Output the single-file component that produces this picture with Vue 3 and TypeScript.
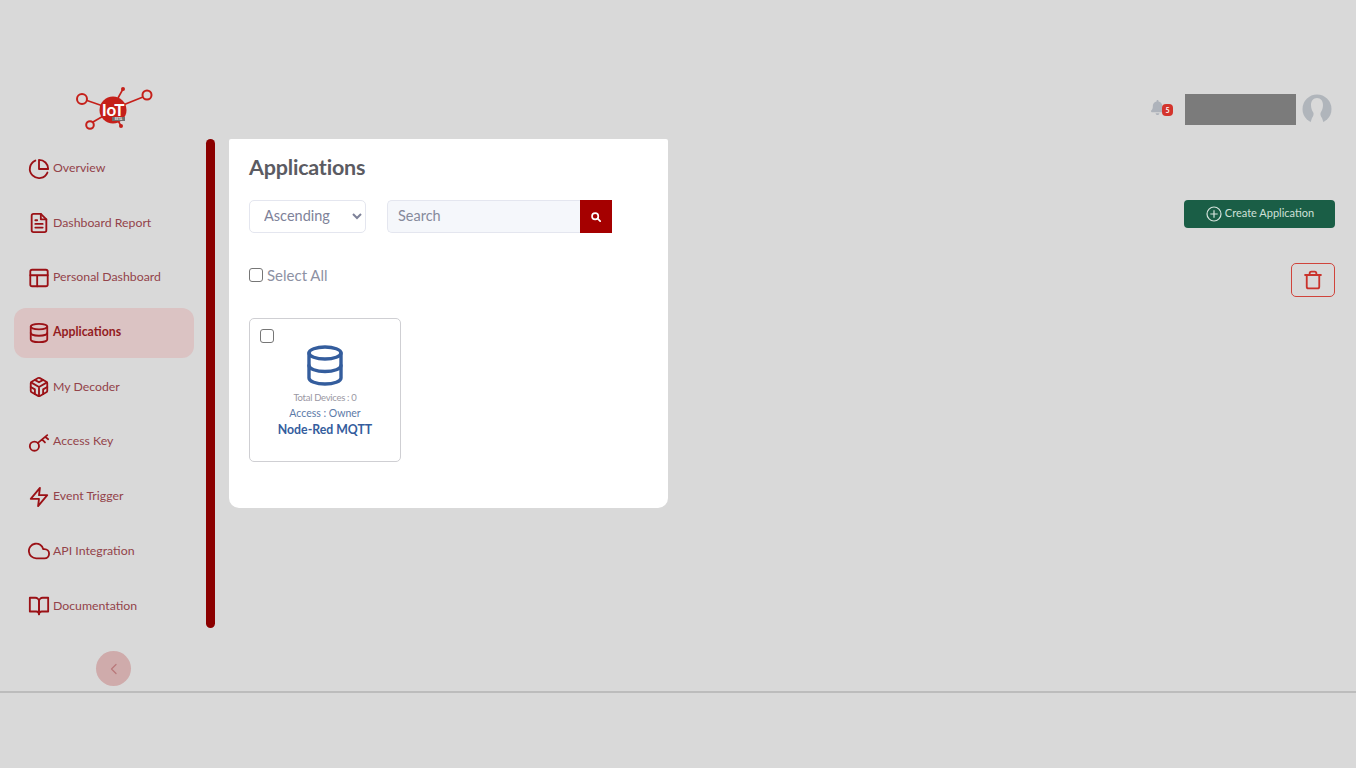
<script setup lang="ts">
const navItems: { label: string; icon: string; active?: boolean }[] = [
  { label: 'Overview', icon: 'pie' },
  { label: 'Dashboard Report', icon: 'doc' },
  { label: 'Personal Dashboard', icon: 'layout' },
  { label: 'Applications', icon: 'db', active: true },
  { label: 'My Decoder', icon: 'cube' },
  { label: 'Access Key', icon: 'key' },
  { label: 'Event Trigger', icon: 'bolt' },
  { label: 'API Integration', icon: 'cloud' },
  { label: 'Documentation', icon: 'book' },
]
</script>

<template>
  <div class="page">
    <div class="main">
      <aside class="sidebar">
        <div class="logo">
          <svg width="78" height="46" viewBox="0 0 78 46">
            <g stroke="#c5201a" stroke-width="1.6" fill="none">
              <line x1="12" y1="15.500" x2="28" y2="21" />
              <line x1="48" y1="20" x2="68" y2="12" />
              <line x1="18" y1="37" x2="30" y2="30" />
              <line x1="43" y1="13" x2="48" y2="4" />
              <line x1="40" y1="30" x2="46" y2="41" />
              <circle cx="7" cy="14" r="5" stroke-width="2" />
              <circle cx="72" cy="10" r="4.500" stroke-width="2" />
              <circle cx="15" cy="40" r="3.800" stroke-width="2" />
            </g>
            <circle cx="48" cy="4" r="2" fill="#c5201a" />
            <circle cx="46" cy="41" r="2" fill="#c5201a" />
            <circle cx="38" cy="25" r="13.500" fill="#c5201a" />
            <text x="38" y="31" text-anchor="middle" class="logo-text">IoT</text>
            <rect x="37" y="32" width="13" height="4" fill="#6f6f6f" />
            <text x="43.500" y="35.400" text-anchor="middle" class="logo-beta">BETA</text>
          </svg>
        </div>
        <div class="nav-wrap">
          <nav class="nav">
            <a v-for="item in navItems" :key="item.label" class="nav-item" :class="{ active: item.active }">
              <span class="nav-icon">
                <svg width="22" height="22" viewBox="0 0 24 24" fill="none" stroke="#9b1116" stroke-width="2" stroke-linecap="round" stroke-linejoin="round">
                  <template v-if="item.icon === 'pie'">
                    <path d="M21.200 15.900A10 10 0 1 1 8 2.800" />
                    <path d="M22 12A10 10 0 0 0 12 2v10z" />
                  </template>
                  <template v-else-if="item.icon === 'doc'">
                    <path d="M14 2H6a2 2 0 0 0-2 2v16a2 2 0 0 0 2 2h12a2 2 0 0 0 2-2V8z" />
                    <path d="M14 2v6h6M16 13H8M16 17H8M10 9H8" />
                  </template>
                  <template v-else-if="item.icon === 'layout'">
                    <rect x="2.500" y="3" width="19" height="18" rx="2" />
                    <path d="M2.500 9h19M10 21V9" />
                  </template>
                  <template v-else-if="item.icon === 'db'">
                    <ellipse cx="12" cy="5" rx="9" ry="3" />
                    <path d="M21 12c0 1.660-4 3-9 3s-9-1.340-9-3" />
                    <path d="M3 5v14c0 1.660 4 3 9 3s9-1.340 9-3V5" />
                  </template>
                  <template v-else-if="item.icon === 'cube'">
                    <path d="M21 16V8a2 2 0 0 0-1-1.730l-7-4a2 2 0 0 0-2 0l-7 4A2 2 0 0 0 3 8v8a2 2 0 0 0 1 1.730l7 4a2 2 0 0 0 2 0l7-4A2 2 0 0 0 21 16z" />
                    <path d="M7.500 4.200l4.500 2.600 4.500-2.600M7.500 19.800V14.600L3 12M21 12l-4.500 2.600v5.200M3.300 7l8.700 5 8.700-5M12 22V12" />
                  </template>
                  <template v-else-if="item.icon === 'key'">
                    <circle cx="7" cy="16.500" r="5" />
                    <path d="M10.800 13 21 4.500M15.500 9.500l3 3M19 6.500l3 2.500" />
                  </template>
                  <template v-else-if="item.icon === 'bolt'">
                    <path d="M13 2 3 14h9l-1 8 10-12h-9l1-8z" />
                  </template>
                  <template v-else-if="item.icon === 'cloud'">
                    <path d="M18 10h-1.300A8 8 0 1 0 9 20h9a5 5 0 0 0 0-10z" />
                  </template>
                  <template v-else>
                    <path d="M2 3h6a4 4 0 0 1 4 4v14a3 3 0 0 0-3-3H2z" />
                    <path d="M22 3h-6a4 4 0 0 0-4 4v14a3 3 0 0 1 3-3h7z" />
                  </template>
                </svg>
              </span>
              <span class="nav-label">{{ item.label }}</span>
            </a>
          </nav>
          <div class="scrollbar"></div>
        </div>
        <div class="collapse-row">
          <button class="collapse" type="button" aria-label="Collapse">
            <svg width="12" height="12" viewBox="0 0 24 24" fill="none" stroke="#b9797b" stroke-width="2.500" stroke-linecap="round" stroke-linejoin="round">
              <path d="M16 3 7 12l9 9" />
            </svg>
          </button>
        </div>
      </aside>

      <div class="content">
        <header class="topbar">
          <span class="bell">
            <svg width="15" height="15" viewBox="0 0 448 512" fill="#aeb3bb">
              <path d="M224 0c-18 0-32 14-32 32v19C119 66 64 131 64 208v19c0 47-17 92-48 127l-7 8c-8 9-10 22-5 34s16 19 29 19h384c13 0 24-8 29-19s3-25-5-34l-7-8c-31-35-48-80-48-127v-19c0-77-55-142-128-157V32c0-18-14-32-32-32zm45 493c12-12 19-28 19-45H160c0 17 7 33 19 45s28 19 45 19 33-7 45-19z" />
            </svg>
            <span class="badge">5</span>
          </span>
          <div class="user-block"></div>
          <span class="avatar">
            <svg width="30" height="30" viewBox="0 0 30 30">
              <circle cx="15" cy="15" r="14.500" fill="#b0b5bb" />
              <path d="M15 4c-3.800 0-6 3-6 7 0 3 1 5.500 2.300 7.500.6 1.500.3 3.500-1.300 5.500l-2 6h14l-2-6c-1.600-2-1.900-4-1.300-5.500 1.300-2 2.300-4.500 2.300-7.500 0-4-2.200-7-6-7z" fill="#d9d9d9" />
            </svg>
          </span>
        </header>

        <div class="work">
          <section class="panel">
            <h1 class="title">Applications</h1>
            <div class="filters">
              <select class="sort">
                <option>Ascending</option>
                <option>Descending</option>
              </select>
              <div class="search">
                <input class="search-input" type="text" placeholder="Search" />
                <button class="search-btn" type="button" aria-label="Search">
                  <svg width="10" height="10" viewBox="0 0 24 24" fill="none" stroke="#fff" stroke-width="4" stroke-linecap="round">
                    <circle cx="10" cy="10" r="7.500" />
                    <path d="m16 16 6 6" />
                  </svg>
                </button>
              </div>
            </div>
            <label class="select-all">
              <input class="check" type="checkbox" />
              <span>Select All</span>
            </label>
            <article class="card">
              <input class="check card-check" type="checkbox" />
              <svg class="card-icon" width="38" height="41" viewBox="0 0 38 41" fill="none" stroke="#345d9d" stroke-width="3.400" stroke-linecap="round" stroke-linejoin="round">
                <ellipse cx="19" cy="8" rx="16" ry="6" />
                <path d="M35 20.500c0 3.300-7.200 6-16 6s-16-2.700-16-6" />
                <path d="M3 8v25c0 3.300 7.200 6 16 6s16-2.700 16-6V8" />
              </svg>
              <p class="devices">Total Devices : 0</p>
              <p class="access">Access : Owner</p>
              <p class="app-name">Node-Red MQTT</p>
            </article>
          </section>

          <div class="actions">
            <button class="create" type="button">
              <svg width="16" height="16" viewBox="0 0 16 16" fill="none" stroke="#d5e3dc" stroke-width="1.200">
                <circle cx="8" cy="8" r="7" />
                <path d="M8 4.300v7.400M4.300 8h7.400" />
              </svg>
              <span class="create-label">Create Application</span>
            </button>
            <button class="trash" type="button" aria-label="Delete">
              <svg width="20" height="20" viewBox="0 0 24 24" fill="none" stroke="#c9332c" stroke-width="2.200" stroke-linecap="round" stroke-linejoin="round">
                <path d="M2.500 6h19M19.500 6v14a2 2 0 0 1-2 2h-11a2 2 0 0 1-2-2V6M8 6V4a2 2 0 0 1 2-2h4a2 2 0 0 1 2 2v2" />
              </svg>
            </button>
          </div>
        </div>
      </div>
    </div>
    <footer class="footer"></footer>
  </div>
</template>

<style>
html, body { margin: 0; background: #d9d9d9; }
</style>

<style scoped>
.page {
  width: 1356px;
  height: 768px;
  background: #d9d9d9;
  display: flex;
  flex-direction: column;
  font-family: "Lato", "Noto Sans", sans-serif;
  overflow: hidden;
}
.main {
  height: 691px;
  padding-top: 85px;
  box-sizing: border-box;
  display: flex;
}
.sidebar {
  width: 229px;
  flex: none;
  display: flex;
  flex-direction: column;
}
.logo {
  height: 54px;
  padding-left: 75px;
}
.logo svg { display: block; }
.logo-text { font: 700 17px "Lato", sans-serif; fill: #fff; }
.logo-beta { font: 700 3px "Lato", sans-serif; fill: #e8e8e8; }
.nav-wrap {
  height: 489px;
  display: flex;
  padding-left: 14px;
}
.nav {
  width: 180px;
  padding-top: 4.500px;
  box-sizing: border-box;
  display: flex;
  flex-direction: column;
  gap: 4.700px;
  overflow: hidden;
}
.nav-item {
  flex: none;
  height: 50px;
  padding-left: 14px;
  border-radius: 12px;
  display: flex;
  align-items: center;
  gap: 3px;
  color: #93434a;
  font-size: 12.300px;
}
.nav-item.active {
  background: #dbc3c3;
  color: #931c22;
  font-weight: 700;
}
.nav-label { padding-bottom: 2px; }
.nav-icon { width: 22px; height: 22px; flex: none; }
.nav-icon svg { display: block; }
.scrollbar {
  width: 9px;
  margin-left: 12px;
  border-radius: 5px;
  background: #8b0000;
}
.collapse-row {
  display: flex;
  padding: 23px 0 0 96px;
}
.collapse {
  width: 35px;
  height: 35px;
  padding: 0;
  border: 0;
  border-radius: 50%;
  background: #cfabab;
  display: flex;
  align-items: center;
  justify-content: center;
}
.content {
  flex: 1;
  min-width: 0;
  display: flex;
  flex-direction: column;
}
.topbar {
  height: 54px;
  display: flex;
  align-items: flex-start;
  padding: 9px 24px 0 0;
  box-sizing: border-box;
  justify-content: flex-end;
}
.bell {
  position: relative;
  width: 24px;
  height: 30px;
  margin-right: 11px;
  padding-top: 6px;
  box-sizing: border-box;
}
.bell svg { display: block; }
.badge {
  position: absolute;
  left: 12px;
  top: 10px;
  width: 11px;
  height: 12px;
  border-radius: 4px;
  background: #d4342c;
  color: #fff;
  font: 700 7px/12px "Lato", sans-serif;
  text-align: center;
}
.user-block {
  width: 111px;
  height: 31px;
  background: #7b7b7b;
}
.avatar {
  width: 30px;
  height: 30px;
  margin-left: 6px;
}
.avatar svg { display: block; }
.work {
  flex: 1;
  display: flex;
  justify-content: space-between;
  align-items: flex-start;
  padding-right: 21px;
}
.panel {
  width: 439px;
  height: 369px;
  box-sizing: border-box;
  padding: 14px 20px 0;
  background: #fff;
  border-radius: 2px 2px 10px 10px;
}
.title {
  margin: 0;
  font-size: 21.500px;
  line-height: 28px;
  font-weight: 700;
  color: #5b5b62;
  letter-spacing: -0.200px;
}
.filters {
  display: flex;
  gap: 21px;
  margin-top: 19px;
}
.sort {
  width: 117px;
  height: 33px;
  padding: 0 0 2px 10px;
  border: 1px solid #e4e6ef;
  border-radius: 5px;
  background: #fff;
  color: #7e8299;
  font: 14.500px "Lato", sans-serif;
}
.search {
  display: flex;
  width: 225px;
  height: 33px;
}
.search-input {
  flex: 1;
  min-width: 0;
  padding: 0 10px 2px;
  border: 1px solid #e4e6ef;
  border-right: 0;
  border-radius: 5px 0 0 5px;
  background: #f5f7fb;
  font: 14.500px "Lato", sans-serif;
  color: #7e8299;
  outline: none;
}
.search-input::placeholder { color: #868a9b; opacity: 1; }
.search-btn {
  width: 32px;
  padding: 0;
  border: 0;
  background: #a50000;
  display: flex;
  align-items: center;
  justify-content: center;
}
.select-all {
  display: flex;
  align-items: center;
  gap: 4px;
  margin-top: 33px;
  height: 18px;
  color: #8d91a3;
  font-size: 15px;
}
.check {
  width: 14px;
  height: 14px;
  margin: 0;
  appearance: none;
  border: 1px solid #767676;
  border-radius: 3px;
  background: #fff;
}
.card {
  position: relative;
  width: 152px;
  height: 144px;
  box-sizing: border-box;
  margin-top: 34px;
  padding-top: 26px;
  border: 1px solid #cfcfd3;
  border-radius: 5px;
  background: #fff;
  text-align: center;
}
.card-check {
  position: absolute;
  left: 10px;
  top: 9.500px;
}
.card-icon { display: block; margin: 0 auto; }
.card p { margin: 0; }
.devices {
  margin-top: 5px !important;
  font-size: 9.500px;
  line-height: 14px;
  color: #9a97a3;
  letter-spacing: -0.300px;
}
.access {
  font-size: 10.500px;
  line-height: 15px;
  margin-top: 1px !important;
  color: #5c7aa8;
}
.app-name {
  font-size: 12.300px;
  line-height: 17px;
  font-weight: 700;
  color: #345d9d;
}
.actions {
  display: flex;
  flex-direction: column;
  align-items: flex-end;
  padding-top: 61px;
}
.create {
  width: 151px;
  height: 28px;
  padding: 0;
  border: 0;
  border-radius: 4px;
  background: #1a5e46;
  color: #cfe0d8;
  font: 11px "Lato", sans-serif;
  display: flex;
  align-items: center;
  justify-content: center;
  gap: 3px;
}
.create svg { flex: none; margin-left: 1px; }
.create-label { padding-bottom: 3px; }
.trash {
  width: 44px;
  height: 34px;
  margin-top: 35px;
  padding: 0;
  background: transparent;
  border: 1px solid #d0443c;
  border-radius: 5px;
  display: flex;
  align-items: center;
  justify-content: center;
}
.footer {
  height: 77px;
  border-top: 2px solid #bcbcbc;
  box-sizing: border-box;
}
</style>
